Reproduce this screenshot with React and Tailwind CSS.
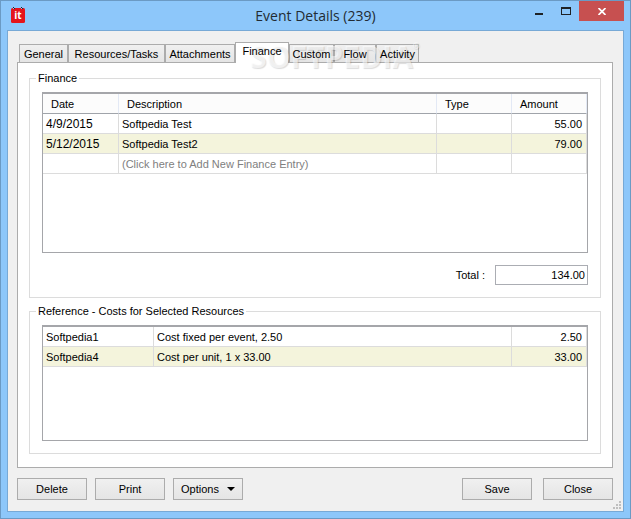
import React from "react";

const tabs = [
  { name: "General", width: "w-[49px]" },
  { name: "Resources/Tasks", width: "w-[97px]" },
  { name: "Attachments", width: "w-[70px]" },
  { name: "Finance", width: "w-[54px]", active: true },
  { name: "Custom", width: "w-[45px]" },
  { name: "Flow", width: "w-[42px]" },
  { name: "Activity", width: "w-[43px]" },
];

const entries = [
  { date: "4/9/2015", description: "Softpedia Test", amount: "55.00" },
  { date: "5/12/2015", description: "Softpedia Test2", amount: "79.00" },
];

const costs = [
  { resource: "Softpedia1", description: "Cost fixed per event, 2.50", amount: "2.50" },
  { resource: "Softpedia4", description: "Cost per unit, 1 x 33.00", amount: "33.00" },
];

const CalendarIcon = () => (
  <svg width="16" height="18" viewBox="0 0 16 18" aria-hidden="true">
    <rect x="1" y="2" width="14" height="15" rx="1.5" fill="#e5141b" />
    <path d="M3 2h2v1H3zM11 2h2v1h-2z" fill="#8dc7fa" />
    <path d="M3 1h1v1h1v1H4V2H3zM11 1h1v1h1v1h-1V2h-1z" fill="#1d2730" />
    <text
      x="8"
      y="13"
      textAnchor="middle"
      fill="#fff"
      className="font-['Open_Sans',sans-serif] text-[10px] font-bold"
    >
      it
    </text>
  </svg>
);

const TitleBar = () => (
  <header className="grid h-[29px] shrink-0 grid-cols-[1fr_auto_1fr] items-start">
    <div className="pt-[5px] pl-[3px]">
      <CalendarIcon />
    </div>
    <h1 className="pt-[5px] font-['Open_Sans',sans-serif] text-[14px] leading-5 text-[#222b33]">
      Event Details (239)
    </h1>
    <div className="flex justify-end">
      <button type="button" aria-label="Minimize" className="flex h-5 w-[27px] items-center justify-center">
        <svg width="8" height="8" viewBox="0 0 8 8">
          <path d="M0 6h8v2H0z" fill="#1e2225" />
        </svg>
      </button>
      <button type="button" aria-label="Maximize" className="flex h-5 w-[27px] items-center justify-center">
        <svg width="10" height="8" viewBox="0 0 10 8">
          <path d="M0 0h10v8H0zM1 2v5h8V2z" fill="#1e2225" fillRule="evenodd" />
        </svg>
      </button>
      <button
        type="button"
        aria-label="Close window"
        className="flex h-5 w-[45px] items-center justify-center bg-[#c75050]"
      >
        <svg width="8" height="7" viewBox="0 0 8 7">
          <path d="M.5 0l7 7M7.5 0l-7 7" stroke="#fff" strokeWidth="1.7" />
        </svg>
      </button>
    </div>
  </header>
);

const Tabs = () => (
  <div className="relative">
    <div role="tablist" className="flex items-end pl-[2px]">
      {tabs.map((tab) => (
        <button
          key={tab.name}
          type="button"
          role="tab"
          aria-selected={!!tab.active}
          className={`${tab.width} shrink-0 border border-b-0 border-[#acacac] text-center whitespace-nowrap ${
            tab.active
              ? "relative -mb-px h-[21px] bg-white pb-1"
              : "h-[18px] bg-gradient-to-b from-[#f0f0f0] to-[#e5e5e5]"
          }`}
        >
          <span className="relative z-30">{tab.name}</span>
        </button>
      ))}
    </div>
    {/* Watermark between the tab strip and its labels */}
    <div
      aria-hidden="true"
      className="pointer-events-none absolute top-0 left-[233px] z-20 font-['Open_Sans',sans-serif] text-[30px] leading-[30px] font-bold text-white/60 [text-shadow:1px_1px_1px_rgba(0,0,0,0.14)]"
    >
      SOFTPEDIA
      <span className="absolute top-0 left-full text-[8px] leading-[8px]">®</span>
    </div>
  </div>
);

const cell = "overflow-hidden border-r border-b border-[#dcdcdc] px-[3px] text-left whitespace-nowrap";
const head = "border-r border-b border-r-[#e3e9f5] border-b-[#a0a4aa] bg-[#fcfcfc] px-2 text-left font-normal";

const FinanceTable = () => (
  <div className="min-h-[120px] flex-1 border border-t-2 border-[#a5a6aa]">
    <table className="w-full table-fixed border-separate border-spacing-0">
      <colgroup>
        <col className="w-[76px]" />
        <col />
        <col className="w-[75px]" />
        <col className="w-[75px]" />
      </colgroup>
      <thead>
        <tr className="h-5">
          <th className={head}>Date</th>
          <th className={head}>Description</th>
          <th className={head}>Type</th>
          <th className={head}>Amount</th>
        </tr>
      </thead>
      <tbody>
        {entries.map((entry) => (
          <tr key={entry.date} className="h-5 even:bg-[#f4f4dc]">
            <td className={`${cell} text-[12px]`}>{entry.date}</td>
            <td className={cell}>{entry.description}</td>
            <td className={cell} />
            <td className={cell}>
              <div className="pr-px text-right">{entry.amount}</div>
            </td>
          </tr>
        ))}
        <tr className="h-5">
          <td className={cell} />
          <td className={`${cell} text-[#808080]`}>(Click here to Add New Finance Entry)</td>
          <td className={cell} />
          <td className={cell} />
        </tr>
      </tbody>
    </table>
  </div>
);

const CostsTable = () => (
  <div className="min-h-[60px] flex-1 border border-t-2 border-[#a5a6aa]">
    <table className="w-full table-fixed border-separate border-spacing-0">
      <colgroup>
        <col className="w-[111px]" />
        <col />
        <col className="w-[75px]" />
      </colgroup>
      <tbody>
        {costs.map((cost) => (
          <tr key={cost.resource} className="h-5 even:bg-[#f4f4dc]">
            <td className={cell}>{cost.resource}</td>
            <td className={cell}>{cost.description}</td>
            <td className={cell}>
              <div className="pr-px text-right">{cost.amount}</div>
            </td>
          </tr>
        ))}
      </tbody>
    </table>
  </div>
);

const Button = ({ children }) => (
  <button
    type="button"
    className="flex h-[22px] w-[70px] items-center justify-center border border-[#acacac] bg-gradient-to-b from-[#f0f0f0] to-[#e5e5e5]"
  >
    {children}
  </button>
);

const App = () => (
  <div className="flex min-h-screen flex-col border border-[#6b9ac4] bg-[#8dc7fa] px-[6px] pb-[6px] font-['Liberation_Sans',Arial,sans-serif] text-[11px] leading-4 text-black">
    <TitleBar />
    <main className="relative flex flex-1 flex-col border border-[#77a9d6] bg-[#f0f0f0] pt-[11px] pr-[10px] pl-[9px]">
      <Tabs />

      <section className="flex flex-1 flex-col gap-[5px] border border-[#acacac] bg-white px-[11px] pt-[7px] pb-[13px]">
        <fieldset className="flex flex-[230_1_0] flex-col border border-[#dcdcdc] px-3 pb-3">
          <legend className="-ml-[6px] px-[2px]">Finance</legend>
          <div className="flex flex-1 flex-col gap-3 pt-[6px]">
            <FinanceTable />
            <div className="flex items-center justify-end gap-[10px]">
              <label htmlFor="total">Total :</label>
              <input
                id="total"
                type="text"
                readOnly
                value="134.00"
                className="h-5 w-[93px] border border-[#abadb3] bg-white px-[2px] text-right"
              />
            </div>
          </div>
        </fieldset>

        <fieldset className="flex flex-[147_1_0] flex-col border border-[#dcdcdc] px-3 pb-3">
          <legend className="-ml-[6px] px-[2px]">Reference - Costs for Selected Resources</legend>
          <div className="flex flex-1 flex-col pt-[6px]">
            <CostsTable />
          </div>
        </fieldset>
      </section>

      <footer className="flex gap-2 pt-[10px] pb-[11px]">
        <Button>Delete</Button>
        <Button>Print</Button>
        <Button>
          <span className="mr-2">Options</span>
          <svg width="8" height="4" viewBox="0 0 8 4" aria-hidden="true">
            <path d="M0 0h8L4 4z" />
          </svg>
        </Button>
        <div className="ml-auto flex gap-[11px]">
          <Button>Save</Button>
          <Button>Close</Button>
        </div>
      </footer>

      {/* Resize grip */}
      <svg
        width="8"
        height="8"
        viewBox="0 0 8 8"
        fill="#bfbfbf"
        aria-hidden="true"
        className="absolute right-[2px] bottom-[2px]"
      >
        <path d="M6 0h2v2H6zM3 3h2v2H3zM6 3h2v2H6zM0 6h2v2H0zM3 6h2v2H3zM6 6h2v2H6z" />
      </svg>
    </main>
  </div>
);

export default App;
